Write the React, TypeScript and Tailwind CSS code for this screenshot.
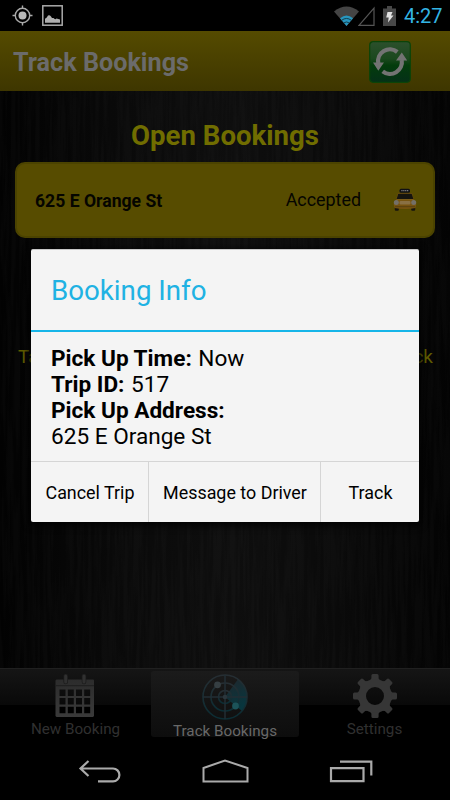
import React from "react";
import type { ReactNode } from "react";

interface NavItem {
  label: string;
  icon: ReactNode;
  active?: boolean;
}

interface BookingDetail {
  label: string;
  value: string;
}

const bookingDetails: BookingDetail[] = [
  { label: "Pick Up Time:", value: "Now" },
  { label: "Trip ID:", value: "517" },
  { label: "Pick Up Address:", value: "625 E Orange St" },
];

const StatusBar = () => (
  <div className="flex h-[31px] shrink-0 items-center bg-black pl-[12px] pr-[7px]">
    <svg className="h-[21px] w-[21px]" viewBox="0 0 21 21" fill="none" stroke="#aaa" strokeWidth="1.4">
      <circle cx="10.5" cy="10.5" r="7.2" />
      <circle cx="10.5" cy="10.5" r="4" fill="#b8b8b8" stroke="none" />
      <path d="M10.5 0.5v3M10.5 17.5v3M0.5 10.5h3M17.5 10.5h3" />
    </svg>
    <svg className="ml-[9px] h-[21px] w-[21px]" viewBox="0 0 21 21">
      <rect x="0.8" y="0.8" width="19.4" height="19.4" fill="none" stroke="#aaa" strokeWidth="1.5" />
      <path d="M3 17.8v-4q2-1 3-3.200q1.500-1 3 1l1 1.400h1.500q1.500 2 3 .5l3.500 1v3.300z" fill="#b0b0b0" />
    </svg>
    <svg className="ml-auto h-[20px] w-[25px]" viewBox="0 0 25 20">
      <path d="M0 5.500Q12.500-4.500 25 5.500L12.500 20z" fill="#444" />
      <path d="M6 12.200Q12.500 7 19 12.200L12.500 20z" fill="#2795bd" />
      <path d="M7.600 14.300Q12.500 10.600 17.400 14.300M9.800 16.900Q12.500 15 15.200 16.900" fill="none" stroke="#12333f" strokeWidth="0.900" />
    </svg>
    <svg className="-ml-px h-[20px] w-[18px]" viewBox="0 0 18 20">
      <path d="M1 19.300L16 2V19.300z" fill="none" stroke="#555" strokeWidth="1.200" />
    </svg>
    <svg className="ml-[7px] h-[20px] w-[13px]" viewBox="0 0 13 20">
      <path d="M4 0h5v2.500h4V20H0V2.500h4z" fill="#484848" />
      <path d="M4.500 6h5L8 9.500h2.500L5 16.500l.7-5H3.200z" fill="#e2e2e2" />
    </svg>
    <span className="ml-[8px] w-[39px] whitespace-nowrap pt-px text-[20px] leading-[31px] text-[#33b5e5]">4:27</span>
  </div>
);

const RefreshIcon = () => (
  <svg className="h-[42px] w-[42px]" viewBox="0 0 42 42">
    <defs>
      <linearGradient id="refreshBg" x1="0" y1="0" x2="0" y2="1">
        <stop offset="0" stopColor="#2c502c" />
        <stop offset="0.42" stopColor="#1b481e" />
        <stop offset="0.58" stopColor="#033c0c" />
        <stop offset="1" stopColor="#053018" />
      </linearGradient>
    </defs>
    <rect x="0.7" y="0.7" width="40.6" height="40.6" rx="3.5" fill="url(#refreshBg)" stroke="#0b4408" strokeWidth="1.2" />
    <g fill="none" stroke="#737373" strokeWidth="4.200">
      <path d="M9.300 22.500A11.800 11.800 0 0 1 28.300 11" />
      <path d="M32.700 19A11.800 11.800 0 0 1 13.700 30.300" />
    </g>
    <path d="M4 21.500h11L9.300 29.700zM27 19.500h11.200L32.800 11.500z" fill="#737373" />
  </svg>
);

const TaxiIcon = () => (
  <svg className="h-[24px] w-[24px]" viewBox="0 0 24 24">
    <rect x="6.500" y="0.800" width="10.500" height="4" rx="1.500" fill="#101014" />
    <path d="M8.300 2.700h7" stroke="#77777a" strokeWidth="1.300" strokeDasharray="1.300 0.600" />
    <rect x="1.800" y="18" width="4" height="4.800" rx="1" fill="#17150f" />
    <rect x="18.200" y="18" width="4" height="4.800" rx="1" fill="#17150f" />
    <path d="M5 5h14l2 7q2.500 1.500 2.300 4.500L22.500 20q-10 2.200-21 0L.7 16.500Q.5 13.500 3 12z" fill="#765310" />
    <path d="M5.300 5.700h13.400l1.700 5.300H3.600z" fill="#15140f" />
    <path d="M4 11.700h16" stroke="#80601c" strokeWidth="1" />
    <rect x="6.500" y="13" width="11" height="3.500" rx="1" fill="#897044" />
    <circle cx="3.300" cy="14.500" r="2.500" fill="#747068" />
    <circle cx="20.700" cy="14.500" r="2.500" fill="#747068" />
    <path d="M2 18.700h20" stroke="#594010" strokeWidth="1" />
  </svg>
);

const CalendarIcon = () => (
  <svg className="mr-[1px] h-[44px] w-[40px] shrink-0" viewBox="0 0 40 44">
    <defs>
      <linearGradient id="iconGrey" x1="0" y1="0" x2="0" y2="1">
        <stop offset="0" stopColor="#2c2c2c" />
        <stop offset="1" stopColor="#3a3a3a" />
      </linearGradient>
    </defs>
    <path
      d="M1.500 5.500h37l.5 1v35.500l-1 1H1.500l-1-1V6.500z M4.500 15.500v6.500h6v-6.500z M12.800 15.500v6.500h6v-6.500z M21 15.500v6.500h6v-6.500z M29.200 15.500v6.500h6v-6.500z M4.500 24.100v6.500h6v-6.500z M12.800 24.100v6.500h6v-6.500z M21 24.100v6.500h6v-6.500z M29.200 24.100v6.500h6v-6.500z M4.500 32.700v6.500h6v-6.500z M12.800 32.700v6.500h6v-6.500z M21 32.700v6.500h6v-6.500z M29.200 32.700v6.500h6v-6.500z"
      fill="url(#iconGrey)"
      fillRule="evenodd"
    />
    <path d="M.5 11.700h38.500" stroke="#1e1e1e" />
    <path d="M10.700 2v6M29 2v6" stroke="#1c1c1c" strokeWidth="4.600" strokeLinecap="round" />
    <path d="M10.700 2v6M29 2v6" stroke="#303030" strokeWidth="3" strokeLinecap="round" />
  </svg>
);

const RadarIcon = () => (
  <svg className="h-[46px] w-[46px] shrink-0" viewBox="0 0 46 46">
    <defs>
      <linearGradient id="radarLine" x1="0" y1="0" x2="0" y2="1">
        <stop offset="0" stopColor="#262e33" />
        <stop offset="1" stopColor="#0b2d34" />
      </linearGradient>
      <linearGradient id="radarSweep" x1="0" y1="0" x2="0.300" y2="1">
        <stop offset="0" stopColor="#20272d" />
        <stop offset="1" stopColor="#07363e" />
      </linearGradient>
    </defs>
    <path d="M23 23L36 5.300A22 22 0 0 1 40 37z" fill="url(#radarSweep)" />
    <g fill="none" stroke="url(#radarLine)" strokeWidth="1.600">
      <circle cx="23" cy="23" r="22" />
      <circle cx="23" cy="23" r="14" />
      <circle cx="23" cy="23" r="6.500" />
    </g>
    <path d="M1 23h44M23 1v44" stroke="#222e34" strokeWidth="1.500" />
    <circle cx="23" cy="23" r="2.300" fill="#2b363c" />
    <circle cx="15.500" cy="10.800" r="3.400" fill="#363f43" />
    <circle cx="33.500" cy="32" r="3.400" fill="#1c5359" />
  </svg>
);

const GearIcon = () => (
  <svg className="h-[44px] w-[44px] shrink-0" viewBox="-22 -22 44 44">
    <g fill="#363636">
      {[0, 45, 90, 135, 180, 225, 270, 315].map((angle) => (
        <path key={angle} d="M-6.500-14L-3.600-17.500V-20.500Q-3.600-22-2.100-22H2.100Q3.600-22 3.600-20.500V-17.500L6.500-14z" transform={`rotate(${angle})`} />
      ))}
      <path d="M0-16.800A16.800 16.800 0 1 1 0 16.800A16.800 16.800 0 1 1 0-16.800M0-9A9 9 0 1 0 0 9A9 9 0 1 0 0-9" fillRule="evenodd" />
    </g>
  </svg>
);

const navItems: NavItem[] = [
  { label: "New Booking", icon: <CalendarIcon /> },
  { label: "Track Bookings", icon: <RadarIcon />, active: true },
  { label: "Settings", icon: <GearIcon /> },
];

// Fine vertical grain over the dark panel
const BrushedTexture = () => (
  <svg className="pointer-events-none absolute inset-0 h-full w-full opacity-[0.014]">
    <filter id="brushed" x="0" y="0" width="100%" height="100%">
      <feTurbulence type="fractalNoise" baseFrequency="0.25 0.012" numOctaves="3" seed="4" />
      <feColorMatrix values="0 0 0 0 1  0 0 0 0 1  0 0 0 0 1  3 0 0 0 -1.000" />
    </filter>
    <rect width="100%" height="100%" filter="url(#brushed)" />
  </svg>
);

const SystemNav = () => (
  <div className="flex h-[60px] shrink-0 bg-black pt-[19px]">
    <svg className="ml-[78px] h-[26px] w-[44px]" viewBox="0 0 44 26" fill="none" stroke="#aaa" strokeWidth="2.200">
      <path d="M10.500 2L2.500 9.500L10.500 17M2.500 9.500H35A6.300 6.300 0 0 1 35 22.300H20" />
    </svg>
    <svg className="ml-[79px] h-[26px] w-[48px]" viewBox="0 0 48 26" fill="none" stroke="#aaa" strokeWidth="2">
      <path d="M2.500 9L24 1.500L46.500 9V22.500H2.500z" />
    </svg>
    <svg className="ml-[80px] h-[26px] w-[45px]" viewBox="0 0 45 26" fill="none" stroke="#aaa" strokeWidth="2.200">
      <path d="M2 9.200h32.500v13H2zM11 2.700h31.300V16.500" />
    </svg>
  </div>
);

const BookingDialog = () => (
  <div className="absolute left-[31px] top-[249px] w-[388px] overflow-hidden rounded-[2px] border-t border-[#c8c8c8] bg-[#f4f4f4] text-black shadow-[0_2px_7px_2px_rgba(0,0,0,0.8)]">
    <h2 className="h-[82px] border-b-[2px] border-[#16b5e8] pl-[20px] text-[27.700px] leading-[81px] text-[#20b2e3]">
      Booking Info
    </h2>
    <div className="h-[129px] pl-[20px] pt-[13.500px] text-[22.600px] leading-[26.300px]">
      {bookingDetails.map((item) => (
        <p key={item.label}>
          <b className="mr-[1px]">{item.label}</b> {item.label === "Pick Up Address:" && <br />}
          {item.value}
        </p>
      ))}
    </div>
    <div className="flex h-[61px] border-t border-[#d5d5d5] text-[17.900px]">
      <button className="w-[117px] pl-px pt-[2px]">Cancel Trip</button>
      <button className="w-[173px] border-x border-[#d5d5d5] pl-px pt-[2px]">Message to Driver</button>
      <button className="flex-1 pl-px pt-[2px]">Track</button>
    </div>
  </div>
);

const App: React.FC = () => {
  return (
    <div className="relative flex h-[800px] w-[450px] flex-col overflow-hidden bg-black font-[Roboto,sans-serif]">
      <StatusBar />

      {/* Title bar */}
      <header className="flex h-[60px] shrink-0 items-center justify-between bg-gradient-to-b from-[#554b00] to-[#3e3600] pl-[13px] pr-[39px] pt-[2px]">
        <h1 className="pt-[2px] text-[25.200px] font-bold text-[#6b6b6b]">Track Bookings</h1>
        <button>
          <RefreshIcon />
        </button>
      </header>

      {/* Brushed metal body */}
      <main className="relative flex-1 bg-[linear-gradient(90deg,#020202,#0a0a0a_28%,#0e0e0e_52%,#0a0a0a_75%,#030303)] px-[15px] pt-[26px]">
        <BrushedTexture />
        <div className="relative">
          <h2 className="text-center text-[27.600px] font-bold leading-[38px] text-[#706d00]">Open Bookings</h2>
          <div className="mt-[7px] flex h-[76px] items-center rounded-[10px] border-2 border-[#4b4300] bg-[#574c00] pl-[18px] pr-[16px] text-[18px] text-[#050500]">
            <span className="pt-[2px] text-[17.600px] font-bold">625 E Orange St</span>
            <span className="ml-auto mr-[32px] text-[17.900px]">Accepted</span>
            <TaxiIcon />
          </div>
          <p className="mt-[108px] flex justify-between pl-[3px] pr-[2px] text-[19px] leading-[22px] text-[#605c00]">
            <span>Tap</span>
            <span>Track</span>
          </p>
        </div>
      </main>

      {/* Tabs */}
      <nav className="flex h-[72px] shrink-0 border-t border-[#202020] bg-[linear-gradient(#151515,#090909_50%,#000_51%)] pt-[2px]">
        {navItems.map((item) => (
          <div
            key={item.label}
            className={`flex h-[66px] flex-col items-center whitespace-nowrap text-[15.200px] leading-[18px] ${
              item.active
                ? "w-[148px] rounded-[3px] bg-[linear-gradient(#1b1b1b,#131313_50%,#0d0d0d)] pt-[3px] text-[#686868]"
                : "w-[151px] pt-[3px] text-[#303030]"
            }`}
          >
            {item.icon}
            <span className="mt-[2px]">{item.label}</span>
          </div>
        ))}
      </nav>

      <SystemNav />
      <BookingDialog />
    </div>
  );
};

export default App;
